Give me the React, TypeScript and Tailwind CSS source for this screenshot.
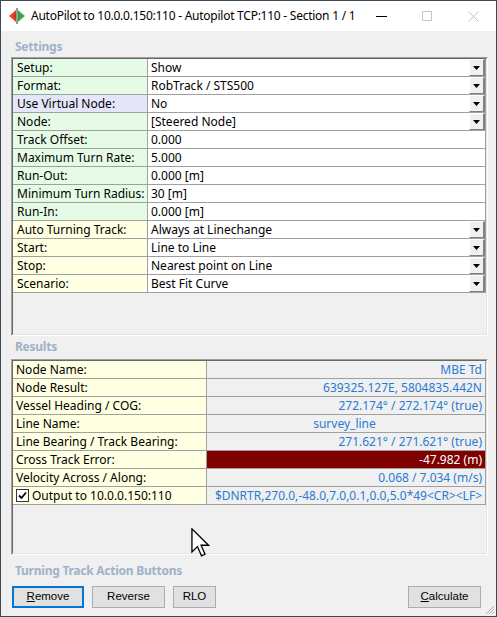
import React from 'react';

type SRow = { l: string; v: string; c: 'g' | 'p' | 'y'; dd?: boolean };

const settings: SRow[] = [
  { l: 'Setup:', v: 'Show', c: 'g', dd: true },
  { l: 'Format:', v: 'RobTrack / STS500', c: 'g', dd: true },
  { l: 'Use Virtual Node:', v: 'No', c: 'p', dd: true },
  { l: 'Node:', v: '[Steered Node]', c: 'g', dd: true },
  { l: 'Track Offset:', v: '0.000', c: 'g' },
  { l: 'Maximum Turn Rate:', v: '5.000', c: 'g' },
  { l: 'Run-Out:', v: '0.000 [m]', c: 'g' },
  { l: 'Minimum Turn Radius:', v: '30 [m]', c: 'g' },
  { l: 'Run-In:', v: '0.000 [m]', c: 'g' },
  { l: 'Auto Turning Track:', v: 'Always at Linechange', c: 'y', dd: true },
  { l: 'Start:', v: 'Line to Line', c: 'y', dd: true },
  { l: 'Stop:', v: 'Nearest point on Line', c: 'y', dd: true },
  { l: 'Scenario:', v: 'Best Fit Curve', c: 'y', dd: true },
];

type RRow = { l: string; v: string; center?: boolean; err?: boolean; check?: boolean };

const results: RRow[] = [
  { l: 'Node Name:', v: 'MBE Td' },
  { l: 'Node Result:', v: '639325.127E, 5804835.442N' },
  { l: 'Vessel Heading / COG:', v: '272.174° / 272.174° (true)' },
  { l: 'Line Name:', v: 'survey_line', center: true },
  { l: 'Line Bearing / Track Bearing:', v: '271.621° / 271.621° (true)' },
  { l: 'Cross Track Error:', v: '-47.982 (m)', err: true },
  { l: 'Velocity Across / Along:', v: '0.068 / 7.034 (m/s)' },
  { l: 'Output to 10.0.0.150:110', v: '$DNRTR,270.0,-48.0,7.0,0.1,0.0,5.0*49<CR><LF>', check: true },
];

const labelBg = (c: 'g' | 'p' | 'y') =>
  c === 'g' ? 'bg-[#e6fbe6]' : c === 'p' ? 'bg-[#e6e6fa]' : 'bg-[#ffffe1]';

function Sunken({ h, children }: { h: string; children: React.ReactNode }) {
  return (
    <div className={`w-[477px] ${h} border-t border-l border-[#a0a0a0] border-b border-r border-b-white border-r-white`}>
      <div className="w-full h-full border-t border-l border-[#696969] border-b border-r border-b-[#e3e3e3] border-r-[#e3e3e3] bg-[#f0f0f0]">
        {children}
      </div>
    </div>
  );
}

function DropBtn() {
  return (
    <div className="w-[16px] h-full flex items-center justify-center bg-[#f0f0f0] border-t border-l border-white border-r-2 border-b border-r-[#808080] border-b-[#808080]">
      <svg width="7" height="4" viewBox="0 0 7 4">
        <path d="M0 0 H7 L3.5 4 Z" fill="#000" />
      </svg>
    </div>
  );
}

function SectionLabel({ text }: { text: string }) {
  return (
    <div className="h-[16px] flex items-center pl-[4px] text-[12px] font-bold text-[#9fb2ca] leading-none tracking-[-0.25px]">
      {text}
    </div>
  );
}

export default function App() {
  return (
    <div
      className="relative w-[497px] h-[617px] border border-[#3a4a5b] bg-[#f0f0f0] flex flex-col overflow-hidden text-[12px] text-black"
      style={{ fontFamily: '"Noto Sans", "Open Sans", sans-serif' }}
    >
      {/* Title bar */}
      <div className="h-[30px] bg-white flex items-center shrink-0">
        <div className="w-[30px] flex items-center justify-center pl-[2px]">
          <svg width="18" height="16" viewBox="0 0 18 16">
            <path d="M8 2 L1 8 L8 14 Z" fill="#e8473a" />
            <path d="M10 2 L17 8 L10 14 Z" fill="#3fb34a" />
            <path d="M8 2 L5 8 L8 14 Z" fill="#c42d22" opacity="0.6" />
            <path d="M10 2 L13 8 L10 14 Z" fill="#2a8c35" opacity="0.5" />
            <rect x="8" y="0" width="2" height="16" fill="#9a9a9a" />
          </svg>
        </div>
        <div className="text-[12px] text-black whitespace-nowrap tracking-[-0.25px]">
          AutoPilot to 10.0.0.150:110 - Autopilot TCP:110 - Section 1 / 1
        </div>
        <div className="flex-1" />
        <div className="w-[46px] h-[30px] flex items-center justify-center">
          <div className="w-[11px] h-[1px] bg-black" />
        </div>
        <div className="w-[46px] h-[30px] flex items-center justify-center">
          <div className="w-[10px] h-[10px] border border-[#c8c8c8]" />
        </div>
        <div className="w-[46px] h-[30px] flex items-center justify-center">
          <svg width="11" height="11" viewBox="0 0 11 11">
            <path d="M0.5 0.5 L10.5 10.5 M10.5 0.5 L0.5 10.5" stroke="#c0c0c0" strokeWidth="1" />
          </svg>
        </div>
      </div>

      <div className="pl-[10px] flex flex-col">
        <div className="h-[8px]" />
        <SectionLabel text="Settings" />
        <div className="h-[2px]" />
        <Sunken h="h-[279px]">
          {settings.map((r) => (
            <div key={r.l} className="h-[18px] flex border-b border-r border-[#a0a0a0]">
              <div className={`w-[135px] shrink-0 border-r border-[#a0a0a0] ${labelBg(r.c)} flex items-center pl-[4px] whitespace-nowrap`}>
                {r.l}
              </div>
              <div className="flex-1 bg-white flex items-center pl-[3px] whitespace-nowrap">{r.v}</div>
              {r.dd && <DropBtn />}
            </div>
          ))}
        </Sunken>
        <div className="h-[3px]" />
        <SectionLabel text="Results" />
        <div className="h-[4px]" />
        <Sunken h="h-[196px]">
          {results.map((r) => (
            <div key={r.l} className="h-[18px] flex border-b border-r border-[#a0a0a0]">
              <div className="w-[194px] shrink-0 border-r border-[#a0a0a0] bg-[#ffffe1] flex items-center pl-[3px] whitespace-nowrap">
                {r.check && (
                  <div className="w-[13px] h-[13px] mr-[3px] border border-[#333] bg-white flex items-center justify-center">
                    <svg width="9" height="9" viewBox="0 0 9 9">
                      <path d="M1 4.5 L3.5 7 L8 1.5" stroke="#000" strokeWidth="1.8" fill="none" />
                    </svg>
                  </div>
                )}
                {r.l}
              </div>
              <div
                className={`flex-1 flex items-center whitespace-nowrap pr-[3px] ${
                  r.err ? 'bg-[#800000] text-white' : 'bg-[#f0f0f0] text-[#2a7bd0]'
                } ${r.center ? 'justify-center' : 'justify-end'}`}
              >
                {r.v}
              </div>
            </div>
          ))}
        </Sunken>
        <div className="h-[8px]" />
        <SectionLabel text="Turning Track Action Buttons" />
        <div className="h-[7px]" />
        <div
          className="flex h-[22px] text-[11.5px] items-stretch pr-[15px]"
          style={{ fontFamily: '"Liberation Sans", Arial, sans-serif' }}
        >
          <div className="ml-[1px] w-[72px] border-2 border-[#0078d7] bg-[#e1e1e1] flex items-center justify-center">
            <span><span className="underline">R</span>emove</span>
          </div>
          <div className="ml-[8px] w-[73px] border border-[#adadad] bg-[#e1e1e1] flex items-center justify-center">
            Reverse
          </div>
          <div className="ml-[8px] w-[43px] border border-[#adadad] bg-[#e1e1e1] flex items-center justify-center">
            RLO
          </div>
          <div className="flex-1" />
          <div className="w-[73px] border border-[#adadad] bg-[#e1e1e1] flex items-center justify-center">
            <span><span className="underline">C</span>alculate</span>
          </div>
        </div>
      </div>

      {/* resize grip */}
      <svg className="absolute right-[1px] bottom-[1px]" width="12" height="12" viewBox="0 0 12 12">
        <path d="M11 3 L3 11 M11 6 L6 11 M11 9 L9 11" stroke="#b0b0b0" strokeWidth="1" />
      </svg>

      {/* mouse cursor */}
      <svg className="absolute left-[190px] top-[527px]" width="19" height="29" viewBox="0 0 13 20">
        <path
          d="M0.6 0.6 L0.6 16.5 L4.4 12.8 L7.2 19.2 L9.6 18.1 L6.9 11.9 L12 11.9 Z"
          fill="#fff"
          stroke="#000"
          strokeWidth="0.9"
          strokeLinejoin="miter"
        />
      </svg>
    </div>
  );
}
